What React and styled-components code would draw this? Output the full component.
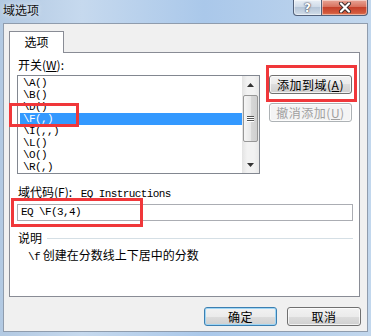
import React from 'react';
import styled, { createGlobalStyle } from 'styled-components';

const Global = createGlobalStyle`
  html, body { margin: 0; padding: 0; }
  body {
    width: 371px; height: 336px; overflow: hidden;
    font-family: "Noto Sans CJK SC", "Liberation Sans", sans-serif;
    font-size: 12px; color: #000;
  }
`;

const Window = styled.div`
  width: 371px; height: 336px; box-sizing: border-box;
  display: flex; flex-direction: column;
  background: linear-gradient(to right, #b2c9e2 0%, #c6d9ee 22%, #aac8ea 55%, #b7d0ec 80%, #c2d7ed 100%);
`;

const TitleBar = styled.div`
  flex: none; height: 23px; display: flex; justify-content: space-between;
  align-items: flex-start; padding: 0 3px;
`;

const Title = styled.div`
  margin-top: 3px; line-height: 14px; font-size: 12px; color: #111;
  text-shadow: 0 0 5px rgba(255,255,255,0.9);
`;

const Controls = styled.div`
  display: flex;
`;

const CtrlButton = styled.div`
  width: ${p => p.$w}px; height: 16px; box-sizing: border-box;
  display: flex; align-items: center; justify-content: center;
  border: 1px solid #52617a; border-top: none;
  border-left: ${p => (p.$close ? 'none' : '1px solid #52617a')};
  border-radius: ${p => (p.$close ? '0 0 4px 0' : '0 0 0 4px')};
  background: ${p => p.$close
    ? 'linear-gradient(#e8a597, #d8725e 45%, #c5412b 50%, #d3593c 85%, #e07a55)'
    : 'linear-gradient(#e9eff6, #cfdbe8 45%, #b6c6d8 50%, #c8d5e3 85%, #d6e1ec)'};
  box-shadow: inset 0 0 0 1px rgba(255,255,255,0.45);
  color: #fff; font-family: "DejaVu Sans", sans-serif; font-weight: bold; font-size: 12px;
  line-height: 14px;
  text-shadow: 0 0 2px #334, 0 0 1px #334;
`;

const Client = styled.div`
  flex: 1; margin: 0 3px 4px 3px; box-sizing: border-box;
  border: 1px solid #8f9cad; background: #f0f0f0;
  display: flex; flex-direction: column;
  padding: 7px 6px 0 5px;
`;

const TabStrip = styled.div`
  display: flex; position: relative; z-index: 1; margin-bottom: -1px;
`;

const Tab = styled.div`
  width: 55px; height: 22px; box-sizing: border-box;
  border: 1px solid #898c95; border-bottom: none; background: #fff;
  text-align: center; line-height: 20px; font-size: 12px;
`;

const Panel = styled.div`
  width: 351px; height: 245px; box-sizing: border-box;
  border: 1px solid #898c95; background: #fff;
  display: flex; flex-direction: column;
  padding: 5px 6px 0 7px;
`;

const Label = styled.div`
  line-height: 14px; font-size: 12px; margin-left: 1px;
  margin-top: ${p => p.$mt || 0}px;
`;

const Mono = styled.span`
  font-family: "Liberation Mono", monospace; font-size: 11px; letter-spacing: -0.6px;
`;

const ListRow = styled.div`
  display: flex; gap: 9px; margin-top: 3px;
`;

const ListBox = styled.div`
  position: relative; width: 243px; height: 99px; box-sizing: border-box;
  border: 1px solid #828790; display: flex; background: #fff;
`;

const Items = styled.div`
  flex: 1; padding: 1px 0 0 2px;
`;

const Item = styled.div`
  height: 12px; line-height: 12px; padding-left: 3px; white-space: pre;
  font-family: "Liberation Mono", monospace; font-size: 11px; letter-spacing: -0.6px;
  background: ${p => (p.$sel ? '#3399ff' : 'transparent')};
  color: ${p => (p.$sel ? '#fff' : '#000')};
`;

const ScrollBar = styled.div`
  width: 17px; display: flex; flex-direction: column;
  background: linear-gradient(to right, #e3e3e3, #f2f2f2 30%, #f2f2f2 70%, #e8e8e8);
`;

const Arrow = styled.div`
  height: 17px; display: flex; align-items: center; justify-content: center;
`;

const Thumb = styled.div`
  margin: 2px 1px 0 1px; height: 47px; box-sizing: border-box;
  border: 1px solid #979797; border-radius: 2px;
  background: linear-gradient(to right, #f5f5f5, #e8e8e8 50%, #d8d8d8 50%, #cfcfcf);
  display: flex; flex-direction: column; align-items: center; justify-content: center; gap: 1px;
`;

const Grip = styled.div`
  width: 7px; height: 1px; background: #555; box-shadow: 0 1px 0 #fff;
`;

const Track = styled.div`
  flex: 1;
`;

const ButtonCol = styled.div`
  position: relative; width: 83px; display: flex; flex-direction: column;
`;

const Button = styled.div`
  width: ${p => p.$w || 83}px; height: 19px; box-sizing: border-box;
  margin-top: ${p => p.$mt || 0}px;
  border: 1px solid ${p => (p.$disabled ? '#adb2b5' : p.$default ? '#3c7fb1' : '#707070')};
  border-radius: 3px;
  background: ${p => (p.$disabled
    ? '#f4f4f4'
    : 'linear-gradient(#f2f2f2, #ebebeb 50%, #dddddd 50%, #cfcfcf)')};
  box-shadow: ${p => (p.$default ? 'inset 0 0 0 1px #9fd6f5' : 'inset 0 0 0 1px rgba(255,255,255,0.7)')};
  color: ${p => (p.$disabled ? '#a0a0a0' : '#000')};
  text-align: center; line-height: 17px; font-size: 12px; letter-spacing: 0.5px;
`;

const InputWrap = styled.div`
  position: relative; margin-top: 3px;
`;

const Input = styled.div`
  width: 336px; height: 17px; box-sizing: border-box;
  border: 1px solid #abadb3; background: #fff;
  padding-left: 3px; line-height: 15px; white-space: pre;
  font-family: "Liberation Mono", monospace; font-size: 11px; letter-spacing: -0.6px;
`;

const GroupHead = styled.div`
  display: flex; align-items: center; margin-top: 10px;
`;

const GroupLine = styled.div`
  flex: 1; height: 1px; background: #d5dfe5; margin-left: 5px;
`;

const Desc = styled.div`
  margin-top: 3px; padding-left: 11px; line-height: 14px; font-size: 12px;
`;

const ButtonRow = styled.div`
  display: flex; justify-content: flex-end; gap: 10px; margin-top: 10px;
`;

const RedBox = styled.div`
  position: absolute; box-sizing: border-box; pointer-events: none; z-index: 5;
  border: 3px solid #f0373a;
  left: ${p => p.$l}px; top: ${p => p.$t}px; width: ${p => p.$w}px; height: ${p => p.$h}px;
`;

const items = ['\\A()', '\\B()', '\\D()', '\\F(,)', '\\I(,,)', '\\L()', '\\O()', '\\R(,)'];

export default function App() {
  return (
    <>
      <Global />
      <Window>
        <TitleBar>
          <Title>域选项</Title>
          <Controls>
            <CtrlButton $w={29}>?</CtrlButton>
            <CtrlButton $w={46} $close>
              <svg width="14" height="11" viewBox="0 0 14 11">
                <path d="M3 1.5 L11 9.5 M11 1.5 L3 9.5" stroke="#3a2a2a" strokeWidth="4" strokeLinecap="round" />
                <path d="M3 1.5 L11 9.5 M11 1.5 L3 9.5" stroke="#fff" strokeWidth="2.2" strokeLinecap="round" />
              </svg>
            </CtrlButton>
          </Controls>
        </TitleBar>
        <Client>
          <TabStrip>
            <Tab>选项</Tab>
          </TabStrip>
          <Panel>
            <Label>开关(<u>W</u>):</Label>
            <ListRow>
              <ListBox>
                <Items>
                  {items.map((t, i) => (
                    <Item key={t} $sel={i === 3}>{t}</Item>
                  ))}
                </Items>
                <ScrollBar>
                  <Arrow>
                    <svg width="7" height="4" viewBox="0 0 7 4"><path d="M0 4 L3.5 0 L7 4 Z" fill="#333" /></svg>
                  </Arrow>
                  <Thumb>
                    <Grip /><Grip /><Grip />
                  </Thumb>
                  <Track />
                  <Arrow>
                    <svg width="7" height="4" viewBox="0 0 7 4"><path d="M0 0 L3.5 4 L7 0 Z" fill="#333" /></svg>
                  </Arrow>
                </ScrollBar>
                <RedBox $l={-9} $t={27} $w={70} $h={24} />
              </ListBox>
              <ButtonCol>
                <Button>添加到域(<u>A</u>)</Button>
                <Button $mt={9} $disabled>撤消添加(<u>U</u>)</Button>
                <RedBox $l={-3} $t={-10} $w={91} $h={37} />
              </ButtonCol>
            </ListRow>
            <Label $mt={11}>域代码(<u>F</u>):&nbsp;<Mono> EQ Instructions</Mono></Label>
            <InputWrap>
              <Input>EQ \F(3,4)</Input>
              <RedBox $l={-6} $t={-6} $w={132} $h={29} />
            </InputWrap>
            <GroupHead>
              <Label>说明</Label>
              <GroupLine />
            </GroupHead>
            <Desc><Mono>\f</Mono> 创建在分数线上下居中的分数</Desc>
          </Panel>
          <ButtonRow>
            <Button $w={73} $default>确定</Button>
            <Button $w={74}>取消</Button>
          </ButtonRow>
        </Client>
      </Window>
    </>
  );
}
